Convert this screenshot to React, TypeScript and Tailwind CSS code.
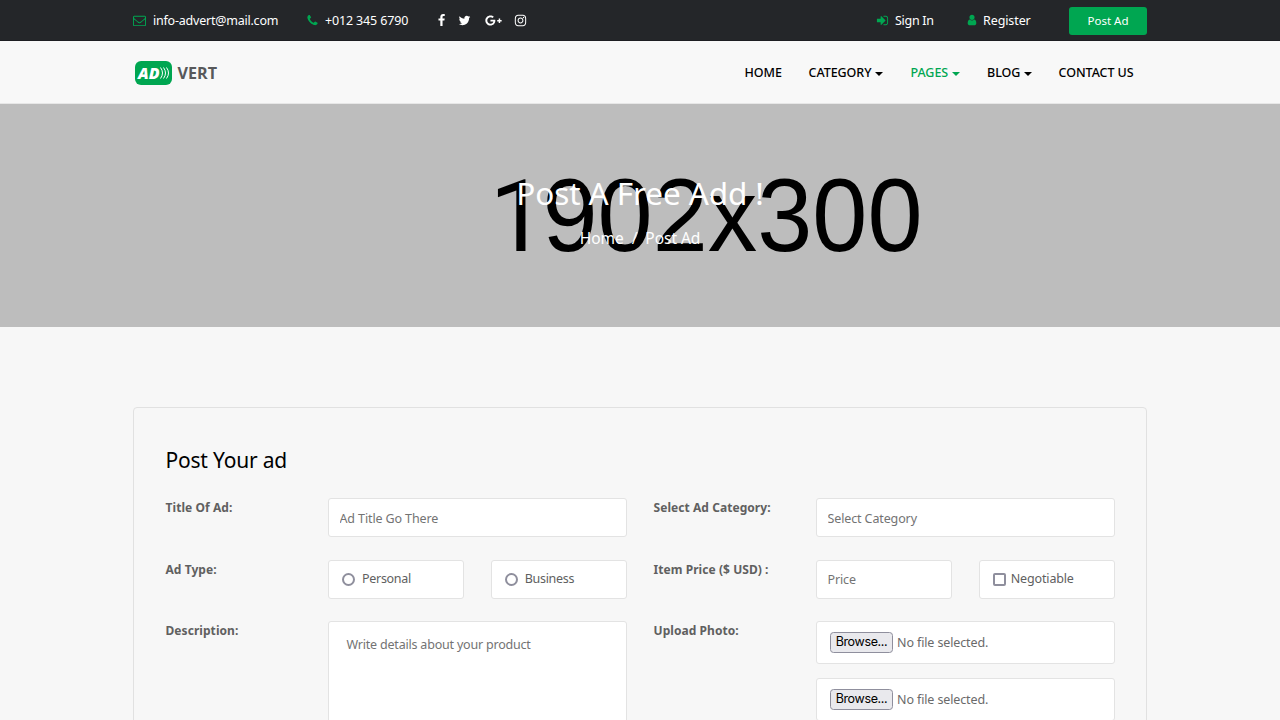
import React from 'react';
import { clsx } from 'clsx';
import { FaGooglePlusG, FaInstagram } from 'react-icons/fa';

const icons = {
  envelope:
    'M1664 1504v-768q-32 36-69 66-268 206-426 338-51 43-83 67t-86.5 48.5-102.5 24.5h-2q-48 0-102.5-24.5t-86.5-48.5-83-67q-158-132-426-338-37-30-69-66v768q0 13 9.5 22.5t22.5 9.5h1472q13 0 22.5-9.5t9.5-22.5zm0-1051v-24.5l-.5-13-3-12.5-5.5-9-9-7.5-14-2.5h-1472q-13 0-22.5 9.5t-9.5 22.5q0 168 147 284 193 152 401 317 6 5 35 29.5t46 37.5 44.5 31.5 50.5 27.5 43 9h2q20 0 43-9t50.5-27.5 44.5-31.5 46-37.5 35-29.5q208-165 401-317 54-43 100.5-115.5t46.5-131.5zm128-37v1088q0 66-47 113t-113 47h-1472q-66 0-113-47t-47-113v-1088q0-66 47-113t113-47h1472q66 0 113 47t47 113z',
  phone:
    'M1600 1240q0 27-10 70.5t-21 68.5q-21 50-122 106-94 51-186 51-27 0-52.5-3.5t-57.5-12.5-47.5-14.5-55.5-20.5-49-18q-98-35-175-83-128-79-264.5-215.5t-215.5-264.5q-48-77-83-175-3-9-18-49t-20.5-55.5-14.5-47.5-12.5-57.5-3.5-52.5q0-92 51-186 56-101 106-122 25-11 68.5-21t70.5-10q14 0 21 3 18 6 53 76 11 19 30 54t35 63.5 31 53.5q3 4 17.5 25t21.5 35.5 7 28.5q0 20-28.5 50t-62 55-62 53-28.5 46q0 9 5 22.5t8.5 20.5 14 24 11.5 19q76 137 174 235t235 174q2 1 19 11.5t24 14 20.5 8.5 22.5 5q18 0 46-28.5t53-62 55-62 50-28.5q14 0 28.5 7t35.5 21.5 25 17.5q25 15 53.5 31t63.5 35 54 30q70 35 76 53 3 7 3 21z',
  facebook:
    'M1343 12v264h-157q-86 0-116 36t-30 108v189h293l-39 296h-254v759h-306v-759h-255v-296h255v-218q0-186 104-288.5t277-102.5q147 0 228 12z',
  twitter:
    'M1684 408q-67 98-162 167 1 14 1 42 0 130-38 259.5t-115.5 248.5-184.5 210.5-258 146-323 54.5q-271 0-496-145 35 4 78 4 225 0 401-138-105-2-188-64.5t-114-159.5q33 5 61 5 43 0 85-11-112-23-185.5-111.5t-73.5-205.5v-4q68 38 146 41-66-44-105-115t-39-154q0-88 44-163 121 149 294.5 238.5t371.5 99.5q-8-38-8-74 0-134 94.5-228.5t228.5-94.5q140 0 236 102 109-21 205-78-37 115-142 178 93-10 186-50z',
  signIn:
    'M1312 896q0 26-19 45l-544 544q-19 19-45 19t-45-19-19-45v-288h-448q-26 0-45-19t-19-45v-384q0-26 19-45t45-19h448v-288q0-26 19-45t45-19 45 19l544 544q19 19 19 45zm352-352v704q0 119-84.5 203.5t-203.5 84.5h-320q-13 0-22.5-9.5t-9.5-22.5q0-4-1-20t-.5-26.5 3-23.5 10-19.5 20.5-6.5h320q66 0 113-47t47-113v-704q0-66-47-113t-113-47h-312l-11.5-1-11.5-3-8-5.5-7-9-2-13.5q0-4-1-20t-.5-26.5 3-23.5 10-19.5 20.5-6.5h320q119 0 203.5 84.5t84.5 203.5z',
  user:
    'M1536 1399q0 109-62.5 187t-150.5 78h-854q-88 0-150.5-78t-62.5-187q0-85 8.5-160.5t31.5-152 58.5-131 94-89 134.5-34.5q131 128 313 128t313-128q76 0 134.5 34.5t94 89 58.5 131 31.5 152 8.5 160.5zm-256-887q0 159-112.5 271.5t-271.5 112.5-271.5-112.5-112.5-271.5 112.5-271.5 271.5-112.5 271.5 112.5 112.5 271.5z',
};

function Icon({ name, className }: { name: keyof typeof icons; className?: string }) {
  return (
    <svg viewBox="0 0 1792 1792" fill="currentColor" className={clsx('shrink-0', className)}>
      <path d={icons[name]} />
    </svg>
  );
}

function TopBar() {
  return (
    <div className="h-[41px] bg-[#242629] border-b border-[#1d1e22] text-white text-[12.5px]">
      <div className="w-[1014px] mx-auto flex h-full">
        <div className="flex items-center h-[41px]">
          <Icon name="envelope" className="w-[13px] h-[13px] text-[#00a651]" />
          <span className="ml-[7px] mt-[2px] w-[155px] tracking-[-0.22px]">info-advert@mail.com</span>
          <Icon name="phone" className="w-[13px] h-[13px] -ml-[2px] text-[#00a651]" />
          <span className="ml-[6px] mt-[2px] w-[110px] tracking-[-0.15px]">+012 345 6790</span>
          <Icon name="facebook" className="w-[13px] h-[13px]" />
          <Icon name="twitter" className="w-[13px] h-[13px] ml-[10px]" />
          <FaGooglePlusG className="w-[17px] h-[17px] ml-[14px]" />
          <FaInstagram className="w-[13px] h-[13px] ml-[12px]" />
        </div>
        <div className="flex ml-auto">
          <a className="flex items-center h-10 w-[90px]">
            <Icon name="signIn" className="w-[13px] h-[13px] text-[#00a651]" />
            <span className="ml-[6px] mt-[2px] tracking-[-0.3px]">Sign In</span>
          </a>
          <a className="flex items-center h-10 w-[103px]">
            <Icon name="user" className="w-[12px] h-[12px] text-[#00a651]" />
            <span className="ml-[5px] mt-[2px] tracking-[-0.1px]">Register</span>
          </a>
          <button className="mt-[7px] w-[78px] h-[28px] rounded-[3px] bg-[#00a651] text-[11.5px]">Post Ad</button>
        </div>
      </div>
    </div>
  );
}

function Logo() {
  return (
    <svg width="84" height="26" viewBox="0 0 84 26" className="ml-[1px]">
      <rect x="1" y="1" width="37" height="24" rx="6" fill="#00a651" />
      <text x="4" y="18.5" textLength="21.5" lengthAdjust="spacingAndGlyphs" fill="#fff" fontFamily="Open Sans, sans-serif" fontSize="15" fontWeight="800" fontStyle="italic">AD</text>
      <g stroke="#fff" strokeWidth="1" fill="none">
        <path d="M26.5 7.5q4 5.5 0 11" />
        <path d="M29.5 7.5q4 5.5 0 11" />
        <path d="M32.5 7.5q4 5.5 0 11" />
      </g>
      <text x="43.5" y="19" textLength="39.5" lengthAdjust="spacingAndGlyphs" fill="#58595b" fontFamily="Open Sans, sans-serif" fontSize="16.5" fontWeight="700">VERT</text>
    </svg>
  );
}

const links = [
  { label: 'HOME', width: 'w-[64px]', caret: false },
  { label: 'CATEGORY', width: 'w-[102px]', caret: true },
  { label: 'PAGES', width: 'w-[76.5px]', caret: true, active: true },
  { label: 'BLOG', width: 'w-[71.5px]', caret: true },
  { label: 'CONTACT US', width: 'w-[88.5px]', caret: false },
];

function Header() {
  return (
    <header className="h-[63px] bg-[#f8f8f8] border-b border-[#e7e7e7]">
      <div className="w-[1014px] h-full mx-auto flex items-center">
        <div className="mt-[2px]"><Logo /></div>
        <nav className="ml-auto mt-[2px] flex text-[12.5px] font-medium tracking-[-0.05px] text-black">
          {links.map((l) => (
            <a key={l.label} className={clsx('flex items-center whitespace-nowrap', l.width, l.active && 'text-[#00a651]')}>
              {l.label}
              {l.caret && (
                <span className="ml-[4px] mt-px border-x-4 border-x-transparent border-t-4 border-t-current" />
              )}
            </a>
          ))}
        </nav>
      </div>
    </header>
  );
}

function Banner() {
  return (
    <section className="relative h-[223.4px] bg-[#bdbdbd] text-white text-center">
      {/* placeholder image */}
      <svg className="absolute inset-0" width="1280" height="223" fill="#000" fontSize="104">
        <text x="489.5" y="147" fontFamily="Roboto, sans-serif" fontSize="101">1</text>
        <text x="542.5" y="147" textLength="380" lengthAdjust="spacingAndGlyphs" fontFamily="Liberation Sans, Arial, sans-serif">902x300</text>
      </svg>
      <div className="relative pt-[68px]">
        <h1 className="text-[31.5px] leading-[42px] tracking-[-0.1px]">Post A Free Add !</h1>
        <p className="mt-[12px] text-[15.5px] leading-6 flex justify-center gap-[8px] tracking-[-0.05px]">
          <span>Home</span>
          <span>/</span>
          <span>Post Ad</span>
        </p>
      </div>
    </section>
  );
}

const box = 'bg-white border border-[#e3e3e3] rounded-[3px]';

function Row({ label, children }: { label: string; children: React.ReactNode }) {
  return (
    <div className="flex">
      <label className="w-[162.5px] shrink-0 pt-px text-[12px] leading-[17px] font-bold tracking-[0.06px] text-[#606060]">{label}</label>
      <div className="flex-1">{children}</div>
    </div>
  );
}

function Field({ placeholder }: { placeholder: string }) {
  return (
    <input
      type="text"
      placeholder={placeholder}
      className={clsx(box, 'block w-full h-[39px] px-[10.5px] pt-px text-[12.5px] tracking-[-0.12px] placeholder-[#737373] outline-none')}
    />
  );
}

function FileField() {
  return (
    <div className={clsx(box, 'h-[43.5px] pl-[13px] flex items-center text-[12.5px] tracking-[-0.12px] text-[#6a6a6a]')}>
      <button className="w-[63px] h-[21px] rounded-[3.5px] border border-[#8f8f9d] bg-[#e9e9ed] font-[Inter] text-[12.5px] tracking-[-0.35px] leading-none text-black">Browse...</button>
      <span className="ml-[4px] mt-px">No file selected.</span>
    </div>
  );
}

function AdForm() {
  return (
    <section className="w-[1014px] mx-auto mt-[80px] h-[400px] border border-[#e1e1e1] rounded-[4px] px-[31.5px] pt-[36px]">
      <h2 className="text-[21px] leading-[32px] tracking-[-0.2px] text-black">Post Your ad</h2>
      <form className="mt-[22px] grid grid-cols-2 gap-x-[27px] gap-y-[22.2px]">
        <Row label="Title Of Ad:">
          <Field placeholder="Ad Title Go There" />
        </Row>
        <Row label="Select Ad Category:">
          <Field placeholder="Select Category" />
        </Row>
        <Row label="Ad Type:">
          <div className="grid grid-cols-2 gap-[27px]">
            {['Personal', 'Business'].map((type) => (
              <div key={type} className={clsx(box, 'h-[39px] pl-[13px] flex items-center text-[12.5px] tracking-[-0.3px] text-[#606060]')}>
                <span className="w-[13px] h-[13px] rounded-full border-2 border-[#8f8f9d]" />
                <span className="ml-[7px] mt-px">{type}</span>
              </div>
            ))}
          </div>
        </Row>
        <Row label="Item Price ($ USD) :">
          <div className="grid grid-cols-2 gap-[27px]">
            <Field placeholder="Price" />
            <div className={clsx(box, 'h-[39px] pl-[13px] flex items-center text-[12.5px] tracking-[-0.15px] text-[#606060]')}>
              <span className="w-[13px] h-[13px] rounded-[2px] border-2 border-[#8f8f9d]" />
              <span className="ml-[5px]">Negotiable</span>
            </div>
          </div>
        </Row>
        <Row label="Description:">
          <textarea
            placeholder="Write details about your product"
            className={clsx(box, 'block w-full h-[200px] px-[17.5px] pt-[14px] text-[12.5px] tracking-[-0.2px] placeholder-[#737373] outline-none resize-none')}
          />
        </Row>
        <Row label="Upload Photo:">
          <div className="flex flex-col gap-[13.5px]">
            <FileField />
            <FileField />
            <FileField />
          </div>
        </Row>
      </form>
    </section>
  );
}

export default function App() {
  return (
    <div className="h-screen overflow-hidden bg-[#f7f7f7] font-['Noto_Sans',sans-serif]">
      <TopBar />
      <Header />
      <Banner />
      <AdForm />
    </div>
  );
}
